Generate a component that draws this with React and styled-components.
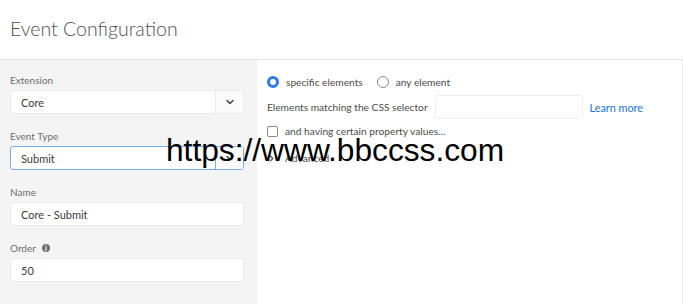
import React from 'react';
import styled, { createGlobalStyle } from 'styled-components';

const GlobalStyle = createGlobalStyle`
  html, body {
    margin: 0;
    padding: 0;
    background: #ffffff;
  }
  body {
    font-family: 'Lato', 'Open Sans', sans-serif;
    color: #4b4b4b;
  }
`;

const Page = styled.div`
  position: relative;
  width: 683px;
  height: 304px;
  overflow: hidden;
  display: flex;
  flex-direction: column;
`;

const Header = styled.header`
  height: 59px;
  flex-shrink: 0;
  display: flex;
  align-items: center;
  padding-left: 10px;
  border-bottom: 1px solid #e6e6e6;
`;

const Title = styled.h1`
  margin: 0 0 2px 0;
  font-family: 'Lato', sans-serif;
  font-weight: 300;
  font-size: 19.5px;
  color: #4f4f4f;
`;

const Body = styled.div`
  flex: 1;
  display: flex;
`;

const Sidebar = styled.aside`
  width: 257px;
  box-sizing: border-box;
  padding: 12px 13px 0 10px;
  background: #f4f4f5;
  display: flex;
  flex-direction: column;
  gap: 14px;
`;

const Field = styled.div`
  display: flex;
  flex-direction: column;
  gap: 2px;
`;

const Label = styled.label`
  display: flex;
  align-items: center;
  gap: 6px;
  font-size: 10px;
  line-height: 16px;
  color: #6e6e6e;
`;

const Info = styled.span`
  width: 8px;
  height: 8px;
  border-radius: 50%;
  background: #707070;
  color: #fff;
  font-size: 7px;
  font-weight: 700;
  line-height: 8px;
  text-align: center;
`;

const Box = styled.div`
  height: 24px;
  box-sizing: border-box;
  display: flex;
  align-items: stretch;
  background: #fff;
  border: 1px solid ${p => (p.$focused ? '#78aef0' : '#ececec')};
  border-radius: 3px;
  font-size: 11px;
  color: #3c3c3c;
`;

const Value = styled.div`
  flex: 1;
  display: flex;
  align-items: center;
  padding-left: 10px;
`;

const Toggle = styled.div`
  width: 27px;
  display: flex;
  align-items: center;
  justify-content: center;
  border-left: 1px solid ${p => (p.$focused ? '#78aef0' : '#ececec')};
  background: #fbfbfb;
`;

const Content = styled.main`
  flex: 1;
  padding: 14px 10px 0 10px;
  display: flex;
  flex-direction: column;
  border-right: 1px solid #ececec;
  font-size: 10.2px;
  color: #4b4b4b;
`;

const Row = styled.div`
  display: flex;
  align-items: center;
  gap: ${p => p.$gap || 6}px;
  margin-top: ${p => p.$mt || 0}px;
  min-height: 16px;
`;

const Option = styled.span`
  display: inline-flex;
  align-items: center;
  gap: 7px;
  margin-right: ${p => p.$mr || 0}px;
`;

const Radio = styled.span`
  width: 12px;
  height: 12px;
  box-sizing: border-box;
  border-radius: 50%;
  border: ${p => (p.$checked ? '3.5px solid #2c7be5' : '1px solid #8a8a8a')};
  background: #fff;
`;

const Checkbox = styled.span`
  width: 11px;
  height: 11px;
  box-sizing: border-box;
  border: 1px solid #8a8a8a;
  border-radius: 2px;
  background: #fff;
`;

const SelectorInput = styled.div`
  width: 148px;
  height: 24px;
  box-sizing: border-box;
  border: 1px solid #efefef;
  border-radius: 3px;
`;

const Link = styled.a`
  color: #1473e6;
  font-size: 10.8px;
  text-decoration: none;
`;

const Watermark = styled.div`
  position: absolute;
  left: 166px;
  top: 132px;
  font-family: 'Liberation Sans', Arial, sans-serif;
  font-size: 31.7px;
  color: #000;
  white-space: nowrap;
  pointer-events: none;
`;

const Chevron = ({ size = 10 }) => (
  <svg width={size} height={size} viewBox="0 0 10 10">
    <path d="M2 3.5 L5 6.5 L8 3.5" fill="none" stroke="#4b4b4b" strokeWidth="1.6" strokeLinecap="round" strokeLinejoin="round" />
  </svg>
);

const ChevronRight = () => (
  <svg width="9" height="9" viewBox="0 0 10 10">
    <path d="M3.5 2 L6.5 5 L3.5 8" fill="none" stroke="#4b4b4b" strokeWidth="1.3" strokeLinecap="round" strokeLinejoin="round" />
  </svg>
);

export default function App() {
  return (
    <>
      <GlobalStyle />
      <Page>
        <Header>
          <Title>Event Configuration</Title>
        </Header>
        <Body>
          <Sidebar>
            <Field>
              <Label>Extension</Label>
              <Box>
                <Value>Core</Value>
                <Toggle><Chevron /></Toggle>
              </Box>
            </Field>
            <Field>
              <Label>Event Type</Label>
              <Box $focused>
                <Value>Submit</Value>
                <Toggle $focused><Chevron /></Toggle>
              </Box>
            </Field>
            <Field>
              <Label>Name</Label>
              <Box>
                <Value>Core - Submit</Value>
              </Box>
            </Field>
            <Field>
              <Label>Order <Info>i</Info></Label>
              <Box>
                <Value>50</Value>
              </Box>
            </Field>
          </Sidebar>
          <Content>
            <Row>
              <Option $mr={8}><Radio $checked />specific elements</Option>
              <Option><Radio />any element</Option>
            </Row>
            <Row $mt={5} $gap={7}>
              <span>Elements matching the CSS selector</span>
              <SelectorInput />
              <Link href="#">Learn more</Link>
            </Row>
            <Row $mt={4}>
              <Option><Checkbox />and having certain property values...</Option>
            </Row>
            <Row $mt={11}>
              <Option><ChevronRight /><span style={{ marginLeft: 2 }}>Advanced</span></Option>
            </Row>
          </Content>
        </Body>
        <Watermark>https://www.bbccss.com</Watermark>
      </Page>
    </>
  );
}
